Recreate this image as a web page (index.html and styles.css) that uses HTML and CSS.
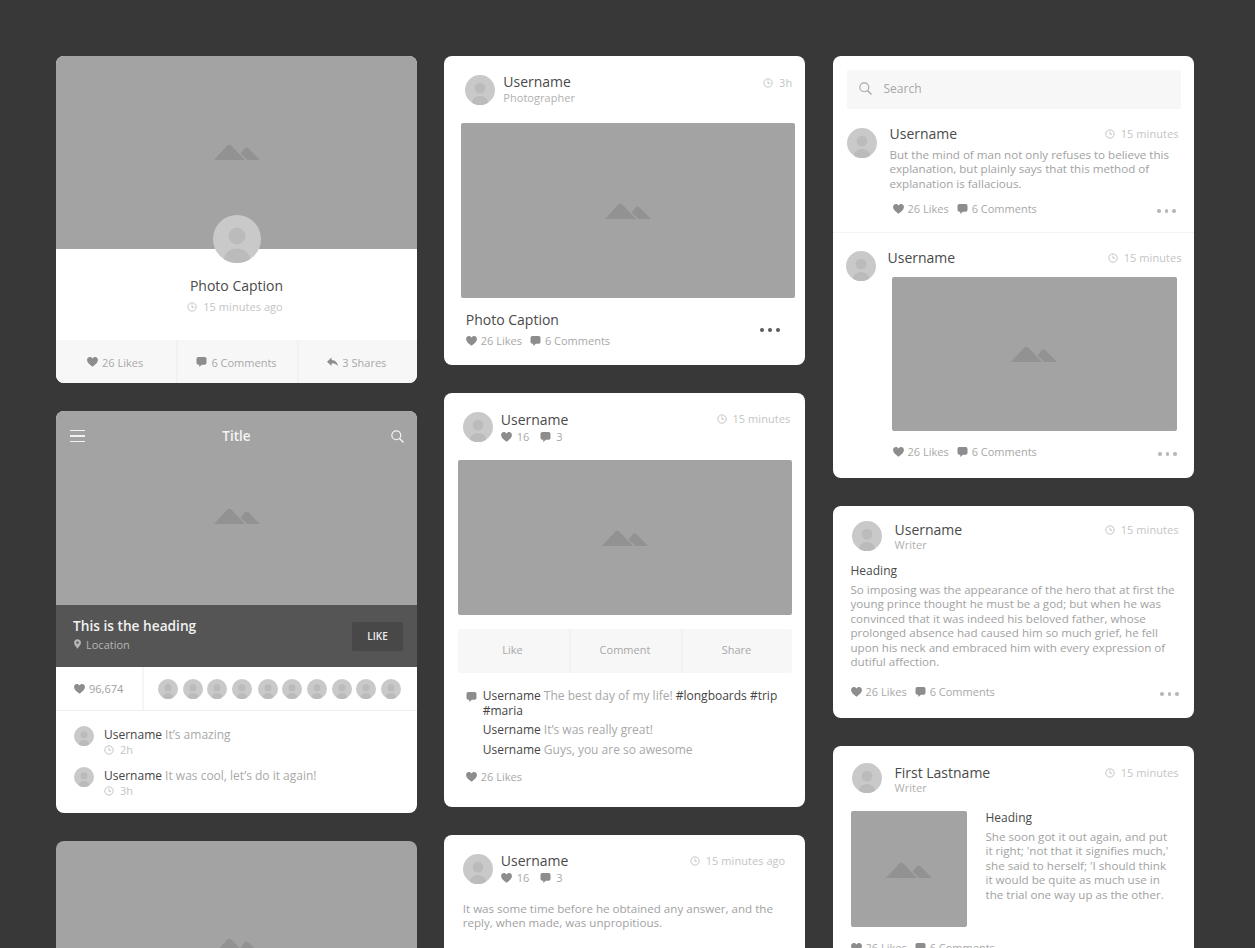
FILE: index.html
```html
<!DOCTYPE html>
<html lang="en">
<head>
<meta charset="utf-8">
<title>Social cards wireframe</title>
<link rel="stylesheet" href="styles.css">
</head>
<body>
<svg class="defs" aria-hidden="true">
  <symbol id="mtn" viewBox="0 0 46 16"><path d="M0 16 12.6 2.2Q15.3-.6 18 2.2L31 16Z"/><path d="M27.5 8.5 30.6 4.6Q32.6 2.6 34.6 4.6L46 16H33.5L26.5 9.5Z"/></symbol>
  <symbol id="avatar" viewBox="0 0 48 48"><circle cx="24" cy="24" r="24" fill="#c9c9c9"/><circle cx="24" cy="21" r="8.500" fill="#bbb"/><path d="M11 44.200C12 37 18 33.500 24 33.500 30 33.500 36 37 37 44.200A24 24 0 0 1 11 44.200Z" fill="#bbb"/></symbol>
  <symbol id="heart" viewBox="0 0 12 11"><path d="M6 10.8C2.6 8.2 0 6.2 0 3.4 0 1.4 1.5 0 3.2 0 4.4 0 5.4.6 6 1.7 6.6.6 7.6 0 8.8 0 10.5 0 12 1.4 12 3.4 12 6.2 9.4 8.2 6 10.8Z"/></symbol>
  <symbol id="bubble" viewBox="0 0 11 11"><path d="M2 0H9Q11 0 11 2V6.5Q11 8.5 9 8.5H6L3 11V8.5H2Q0 8.5 0 6.5V2Q0 0 2 0Z"/></symbol>
  <symbol id="reply" viewBox="0 0 12 10"><path d="M5 0V2.8C9 3 11.400 5.500 12 10 10.500 7.500 8.500 6.400 5 6.400V9.400L0 4.700Z"/></symbol>
  <symbol id="clock" viewBox="0 0 12 12"><circle cx="6" cy="6" r="5" fill="none" stroke="currentColor" stroke-width="1.200"/><path d="M6 3V6.400H8.600" fill="none" stroke="currentColor" stroke-width="1.100"/></symbol>
  <symbol id="pin" viewBox="0 0 8 11"><path fill-rule="evenodd" d="M4 0C6.200 0 8 1.700 8 3.900 8 6.400 5.400 9 4 11 2.600 9 0 6.400 0 3.900 0 1.700 1.800 0 4 0ZM4 2.500A1.400 1.400 0 1 0 4 5.300 1.400 1.400 0 1 0 4 2.500Z"/></symbol>
  <symbol id="search" viewBox="0 0 14 14"><circle cx="5.700" cy="5.700" r="4.800" fill="none" stroke="currentColor" stroke-width="1.300"/><path d="M9.200 9.200 13.400 13.400" fill="none" stroke="currentColor" stroke-width="1.500"/></symbol>
</svg>

<main class="board">
  <section class="col">
    <article class="card c-profile">
      <div class="photo photo-profile"><svg class="mtn"><use href="#mtn"/></svg></div>
      <svg class="av-48"><use href="#avatar"/></svg>
      <div class="profile-body">
        <h2 class="t-caption">Photo Caption</h2>
        <p class="time center"><svg class="i-clock"><use href="#clock"/></svg>15 minutes ago</p>
      </div>
      <div class="tabs tabs-foot">
        <span class="tab"><svg class="i"><use href="#heart"/></svg>26 Likes</span>
        <span class="tab"><svg class="i"><use href="#bubble"/></svg>6 Comments</span>
        <span class="tab"><svg class="i"><use href="#reply"/></svg>3 Shares</span>
      </div>
    </article>

    <article class="card c-hero">
      <div class="photo photo-hero">
        <div class="topbar">
          <span class="burger"><i></i><i></i><i></i></span>
          <span class="topbar-title">Title</span>
          <svg class="i-search-w"><use href="#search"/></svg>
        </div>
        <svg class="mtn"><use href="#mtn"/></svg>
      </div>
      <div class="banner">
        <div>
          <h2 class="banner-title">This is the heading</h2>
          <p class="banner-loc"><svg class="i-pin"><use href="#pin"/></svg>Location</p>
        </div>
        <span class="btn-like">LIKE</span>
      </div>
      <div class="likers">
        <span class="liker-count"><svg class="i"><use href="#heart"/></svg>96,674</span>
        <div class="liker-avs">
          <svg class="av-20"><use href="#avatar"/></svg><svg class="av-20"><use href="#avatar"/></svg><svg class="av-20"><use href="#avatar"/></svg><svg class="av-20"><use href="#avatar"/></svg><svg class="av-20 gap"><use href="#avatar"/></svg><svg class="av-20"><use href="#avatar"/></svg><svg class="av-20"><use href="#avatar"/></svg><svg class="av-20"><use href="#avatar"/></svg><svg class="av-20"><use href="#avatar"/></svg><svg class="av-20"><use href="#avatar"/></svg>
        </div>
      </div>
      <div class="replies">
        <div class="reply">
          <svg class="av-20"><use href="#avatar"/></svg>
          <div class="reply-text">
            <p class="body"><b>Username</b> It’s amazing</p>
            <p class="time"><svg class="i-clock"><use href="#clock"/></svg>2h</p>
          </div>
        </div>
        <div class="reply">
          <svg class="av-20"><use href="#avatar"/></svg>
          <div class="reply-text">
            <p class="body"><b>Username</b> It was cool, let’s do it again!</p>
            <p class="time"><svg class="i-clock"><use href="#clock"/></svg>3h</p>
          </div>
        </div>
      </div>
    </article>

    <article class="card c-tail">
      <div class="photo photo-tail"><svg class="mtn"><use href="#mtn"/></svg></div>
    </article>
  </section>

  <section class="col">
    <article class="card c-photog">
      <header class="head">
        <svg class="av-30"><use href="#avatar"/></svg>
        <div class="who">
          <h3 class="name">Username</h3>
          <p class="role">Photographer</p>
        </div>
        <p class="time"><svg class="i-clock"><use href="#clock"/></svg>3h</p>
      </header>
      <div class="photo photo-175"><svg class="mtn"><use href="#mtn"/></svg></div>
      <div class="caption-row">
        <div>
          <h2 class="t-caption">Photo Caption</h2>
          <div class="stats">
            <span><svg class="i"><use href="#heart"/></svg>26 Likes</span>
            <span><svg class="i"><use href="#bubble"/></svg>6 Comments</span>
          </div>
        </div>
        <span class="dots dots-dark"><i></i><i></i><i></i></span>
      </div>
    </article>

    <article class="card c-feed">
      <header class="head">
        <svg class="av-30"><use href="#avatar"/></svg>
        <div class="who">
          <h3 class="name">Username</h3>
          <div class="stats stats-num">
            <span><svg class="i"><use href="#heart"/></svg>16</span>
            <span><svg class="i"><use href="#bubble"/></svg>3</span>
          </div>
        </div>
        <p class="time"><svg class="i-clock"><use href="#clock"/></svg>15 minutes</p>
      </header>
      <div class="photo photo-155"><svg class="mtn"><use href="#mtn"/></svg></div>
      <div class="tabs tabs-inline">
        <span class="tab">Like</span>
        <span class="tab">Comment</span>
        <span class="tab">Share</span>
      </div>
      <div class="thread">
        <svg class="i i-thread"><use href="#bubble"/></svg>
        <p class="body line-first"><b>Username</b> The best day of my life! <b>#longboards #trip #maria</b></p>
        <p class="body line-two"><b>Username</b> It’s was really great!</p>
        <p class="body line-three"><b>Username</b> Guys, you are so awesome</p>
      </div>
      <div class="stats feed-likes"><span><svg class="i"><use href="#heart"/></svg>26 Likes</span></div>
    </article>

    <article class="card c-text">
      <header class="head">
        <svg class="av-30"><use href="#avatar"/></svg>
        <div class="who">
          <h3 class="name">Username</h3>
          <div class="stats stats-num">
            <span><svg class="i"><use href="#heart"/></svg>16</span>
            <span><svg class="i"><use href="#bubble"/></svg>3</span>
          </div>
        </div>
        <p class="time"><svg class="i-clock"><use href="#clock"/></svg>15 minutes ago</p>
      </header>
      <p class="para para-text">It was some time before he obtained any answer, and the<br>reply, when made, was unpropitious.</p>
    </article>
  </section>

  <section class="col">
    <article class="card c-list">
      <div class="searchbox"><svg class="i-search"><use href="#search"/></svg>Search</div>
      <div class="post post-a">
        <svg class="av-30"><use href="#avatar"/></svg>
        <div class="post-main">
          <div class="post-top"><h3 class="name">Username</h3><p class="time"><svg class="i-clock"><use href="#clock"/></svg>15 minutes</p></div>
          <p class="para">But the mind of man not only refuses to believe this<br>explanation, but plainly says that this method of<br>explanation is fallacious.</p>
          <div class="foot foot-a">
            <div class="stats">
              <span><svg class="i"><use href="#heart"/></svg>26 Likes</span>
              <span><svg class="i"><use href="#bubble"/></svg>6 Comments</span>
            </div>
            <span class="dots"><i></i><i></i><i></i></span>
          </div>
        </div>
      </div>
      <div class="post post-b">
        <svg class="av-30"><use href="#avatar"/></svg>
        <div class="post-main">
          <div class="post-top"><h3 class="name">Username</h3><p class="time"><svg class="i-clock"><use href="#clock"/></svg>15 minutes</p></div>
          <div class="photo photo-post"><svg class="mtn"><use href="#mtn"/></svg></div>
          <div class="foot foot-b">
            <div class="stats">
              <span><svg class="i"><use href="#heart"/></svg>26 Likes</span>
              <span><svg class="i"><use href="#bubble"/></svg>6 Comments</span>
            </div>
            <span class="dots"><i></i><i></i><i></i></span>
          </div>
        </div>
      </div>
    </article>

    <article class="card c-writer">
      <header class="head">
        <svg class="av-30"><use href="#avatar"/></svg>
        <div class="who">
          <h3 class="name">Username</h3>
          <p class="role">Writer</p>
        </div>
        <p class="time"><svg class="i-clock"><use href="#clock"/></svg>15 minutes</p>
      </header>
      <h4 class="subhead">Heading</h4>
      <p class="para">So imposing was the appearance of the hero that at first the<br>young prince thought he must be a god; but when he was<br>convinced that it was indeed his beloved father, whose<br>prolonged absence had caused him so much grief, he fell<br>upon his neck and embraced him with every expression of<br>dutiful affection.</p>
      <div class="foot foot-w">
        <div class="stats">
          <span><svg class="i"><use href="#heart"/></svg>26 Likes</span>
          <span><svg class="i"><use href="#bubble"/></svg>6 Comments</span>
        </div>
        <span class="dots"><i></i><i></i><i></i></span>
      </div>
    </article>

    <article class="card c-article">
      <header class="head">
        <svg class="av-30"><use href="#avatar"/></svg>
        <div class="who">
          <h3 class="name">First Lastname</h3>
          <p class="role">Writer</p>
        </div>
        <p class="time"><svg class="i-clock"><use href="#clock"/></svg>15 minutes</p>
      </header>
      <div class="media">
        <div class="photo photo-thumb"><svg class="mtn"><use href="#mtn"/></svg></div>
        <div>
          <h4 class="subhead">Heading</h4>
          <p class="para">She soon got it out again, and put<br>it right; 'not that it signifies much,'<br>she said to herself; 'I should think<br>it would be quite as much use in<br>the trial one way up as the other.</p>
        </div>
      </div>
      <div class="stats">
        <span><svg class="i"><use href="#heart"/></svg>26 Likes</span>
        <span><svg class="i"><use href="#bubble"/></svg>6 Comments</span>
      </div>
    </article>
  </section>
</main>
</body>
</html>
```
FILE: styles.css
```css
* { box-sizing: border-box; }
html, body { margin: 0; height: 948px; overflow: hidden; }
body {
  background: #383838;
  font-family: "Open Sans", "Liberation Sans", sans-serif;
  color: #a8a8a8;
}
h2, h3, h4, p { margin: 0; font-weight: 400; }
b { font-weight: 400; color: #444; }
.defs { display: none; }

.board {
  display: grid;
  grid-template-columns: repeat(3, 361px);
  column-gap: 27.250px;
  padding: 56px 0 0 56px;
}
.col { display: flex; flex-direction: column; gap: 28px; }
.card {
  position: relative;
  background: #fff;
  border-radius: 8px;
  overflow: hidden;
  flex: none;
}

/* Shared bits */
.photo {
  display: flex;
  align-items: center;
  justify-content: center;
  background: #a3a3a3;
}
.mtn { width: 46px; height: 16px; fill: #929292; }
.photo-175, .photo-155, .photo-post, .photo-thumb { border-radius: 2px; }
.av-48 { position: absolute; left: 156.500px; top: 159px; width: 48px; height: 48px; }
.av-30 { width: 30px; height: 30px; flex: none; }
.av-20 { width: 20px; height: 20px; flex: none; }
.i { width: 11px; height: 10px; fill: #8d8d8d; flex: none; margin-right: 4px; }
.i-clock { width: 10px; height: 10px; margin-right: 6px; color: #c4c4c4; flex: none; }
.time {
  display: flex;
  align-items: center;
  font-size: 11px;
  line-height: 14px;
  letter-spacing: .05px;
  color: #c4c4c4;
  white-space: nowrap;
}
.time.center { justify-content: center; padding-right: 3px; }
.name { font-size: 14px; line-height: 16px; color: #4a4a4a; }
.role { font-size: 11px; line-height: 14px; letter-spacing: .05px; color: #b0b0b0; }
.body { font-size: 12px; line-height: 15px; color: #a8a8a8; }
.para { font-size: 11.600px; line-height: 14.400px; color: #a2a2a2; }
.t-caption { font-size: 14px; line-height: 18px; color: #4a4a4a; }
.subhead { font-size: 12px; line-height: 15px; color: #4a4a4a; }
.stats { display: flex; gap: 8px; font-size: 11px; line-height: 14px; color: #a8a8a8; }
.stats span { display: flex; align-items: center; }
.stats-num { gap: 11px; }
.stats-num .i { margin-right: 5px; }
.head { display: flex; align-items: flex-start; }
.who { flex: 1; margin-left: 8px; }
.foot { display: flex; justify-content: space-between; align-items: center; }
.dots { display: flex; gap: 4px; padding-top: 4px; }
.dots i { width: 3.500px; height: 3.500px; border-radius: 50%; background: #b8b8b8; }
.dots-dark i { background: #5a5a5a; }
.tabs { display: grid; grid-template-columns: repeat(3, 1fr); background: #f7f7f7; }
.tab {
  display: flex;
  align-items: center;
  justify-content: center;
  padding-right: 2px;
  font-size: 11px;
  color: #a8a8a8;
  border-left: 2px solid #f1f1f1;
}
.tab:first-child { border-left: 0; }

/* Column 1 */
.c-profile { height: 327px; }
.photo-profile { height: 193px; padding-bottom: 2px; }
.profile-body { height: 91px; padding-top: 28px; text-align: center; }
.profile-body .time { margin-top: 5px; }
.tabs-foot { height: 43px; padding-top: 1px; }

.c-hero { height: 402px; }
.photo-hero { position: relative; height: 194px; padding-top: 16px; }
.topbar {
  position: absolute;
  inset: 0 0 auto 0;
  height: 50px;
  display: flex;
  align-items: center;
  justify-content: space-between;
  padding: 0 13px 0 14px;
}
.burger { display: flex; flex-direction: column; gap: 4px; width: 15px; }
.burger i { height: 1.500px; background: #f2f2f2; }
.topbar-title { font-size: 13.500px; font-weight: 600; color: #f4f4f4; margin-right: 3px; }
.i-search-w { width: 13px; height: 13px; color: #f4f4f4; }
.banner {
  height: 62px;
  background: #555;
  display: flex;
  align-items: center;
  justify-content: space-between;
  padding: 0 14px 4px 17px;
}
.banner-title { font-size: 13.700px; line-height: 18px; font-weight: 600; color: #f2f2f2; }
.banner-loc { display: flex; align-items: center; font-size: 11px; line-height: 15px; color: #b5b5b5; margin-top: 2px; }
.i-pin { width: 7px; height: 10px; fill: #b5b5b5; margin-left: 1px; margin-right: 5px; }
.btn-like {
  width: 51px;
  height: 29px;
  margin-top: 4px;
  border-radius: 2px;
  background: #484848;
  display: flex;
  align-items: center;
  justify-content: center;
  font-size: 10px;
  font-weight: 600;
  color: #eee;
}
.likers { height: 44px; display: flex; align-items: center; border-bottom: 1px solid #f0f0f0; }
.liker-count {
  width: 88px;
  height: 100%;
  display: flex;
  align-items: center;
  padding-left: 18px;
  font-size: 11px;
  color: #a0a0a0;
  border-right: 2px solid #f5f5f5;
}
.liker-avs { display: flex; gap: 4.600px; padding-left: 14px; }
.liker-avs .gap { margin-left: 1.500px; }
.replies { padding: 15px 0 0 18px; display: flex; flex-direction: column; gap: 10px; }
.reply { display: flex; gap: 10px; }
.reply-text { padding-top: 1px; }
.reply .time { line-height: 15px; }

.c-tail { height: 200px; }
.photo-tail { height: 200px; padding-top: 10px; }

/* Column 2 */
.c-photog { height: 309px; padding: 19px 12px 0 16.500px; }
.c-photog .head { margin-left: 4.500px; }
.c-photog .head .name { margin-top: -1px; }
.c-photog .role { margin-top: 1px; }
.c-photog .head .time { margin: 1px 1px 0 0; }
.photo-175 { height: 175px; margin-top: 18px; margin-right: -2px; }
.caption-row { display: flex; justify-content: space-between; align-items: center; padding: 13px 12px 0 5px; }
.caption-row .stats { margin-top: 5px; }
.dots-dark { gap: 4px; margin-right: 1px; padding-top: 0; }
.dots-dark i { width: 4px; height: 4px; }

.c-feed { height: 414px; padding: 19px 13px 0 13.500px; }
.c-feed .head { margin-left: 5px; }
.c-feed .head .time { margin-right: 2px; }
.c-feed .stats-num, .c-text .stats-num { margin-top: 2px; }
.c-feed > .head { height: 48px; }
.c-text .who .name { margin-top: -1px; }
.photo-155 { height: 155px; }
.tabs-inline { height: 44px; margin-top: 14px; border-radius: 2px; }
.tabs-inline .tab { padding-bottom: 3px; }
.thread { position: relative; padding: 15px 8px 0 25px; }
.i-thread { position: absolute; left: 8px; top: 19px; }
.line-two { margin-top: 4px; }
.line-three { margin-top: 5px; }
.feed-likes { padding: 13px 0 0 8px; }

.c-text { height: 150px; padding: 19px 20px 0 18.500px; }
.para-text { margin-top: 17px; }

/* Column 3 */
.c-list { height: 422px; }
.searchbox {
  margin: 14px 13px 0 14px;
  height: 39px;
  display: flex;
  align-items: center;
  padding: 0 0 2px 12px;
  background: #f7f7f7;
  font-size: 12px;
  color: #a8a8a8;
}
.i-search { width: 13px; height: 13px; margin-right: 12px; color: #a8a8a8; }
.post { display: flex; }
.post-a { padding: 19px 15px 0 14px; height: 124px; border-bottom: 1px solid #f3f3f3; }
.post-b { padding: 18px 12px 0 13px; }
.post-main { flex: 1; margin-left: 13px; }
.post-b .post-main { margin-left: 12px; }
.post-top { display: flex; justify-content: space-between; align-items: center; }
.post-a .post-top { margin-top: -2px; }
.post-b .post-top { margin-top: -1px; }
.post-a .para { margin-top: 6px; }
.foot-a { margin-top: 11px; padding: 0 3px 0 3px; }
.photo-post { height: 154px; margin: 11px 5px 0 4px; }
.foot-b { margin-top: 14px; padding: 0 5px 0 5px; }

.c-writer { height: 212px; padding: 15px 15px 0 18px; }
.c-writer .head .name { margin-top: 1px; }
.c-writer .head .time { margin-top: 2px; }
.c-writer .who { margin-left: 13px; }
.c-writer .head .av-30 { margin-left: 1px; }
.c-writer > .subhead { margin-top: 11px; }
.c-writer > .para { margin-top: 5px; }
.foot-w { margin-top: 15.500px; }

.c-article { height: 300px; padding: 17px 15px 0 18px; }
.c-article .head .name { margin-top: 2px; }
.c-article .head .time { margin-top: 3px; }
.c-article .who { margin-left: 13px; }
.c-article .head .av-30 { margin-left: 1px; }
.media { display: flex; gap: 19px; margin-top: 16px; }
.media .subhead { margin-top: -1px; }
.photo-thumb { width: 116px; height: 116px; flex: none; padding-top: 2px; }
.media .para { margin-top: 5px; }
.c-article > .stats { margin-top: 14px; }
```
